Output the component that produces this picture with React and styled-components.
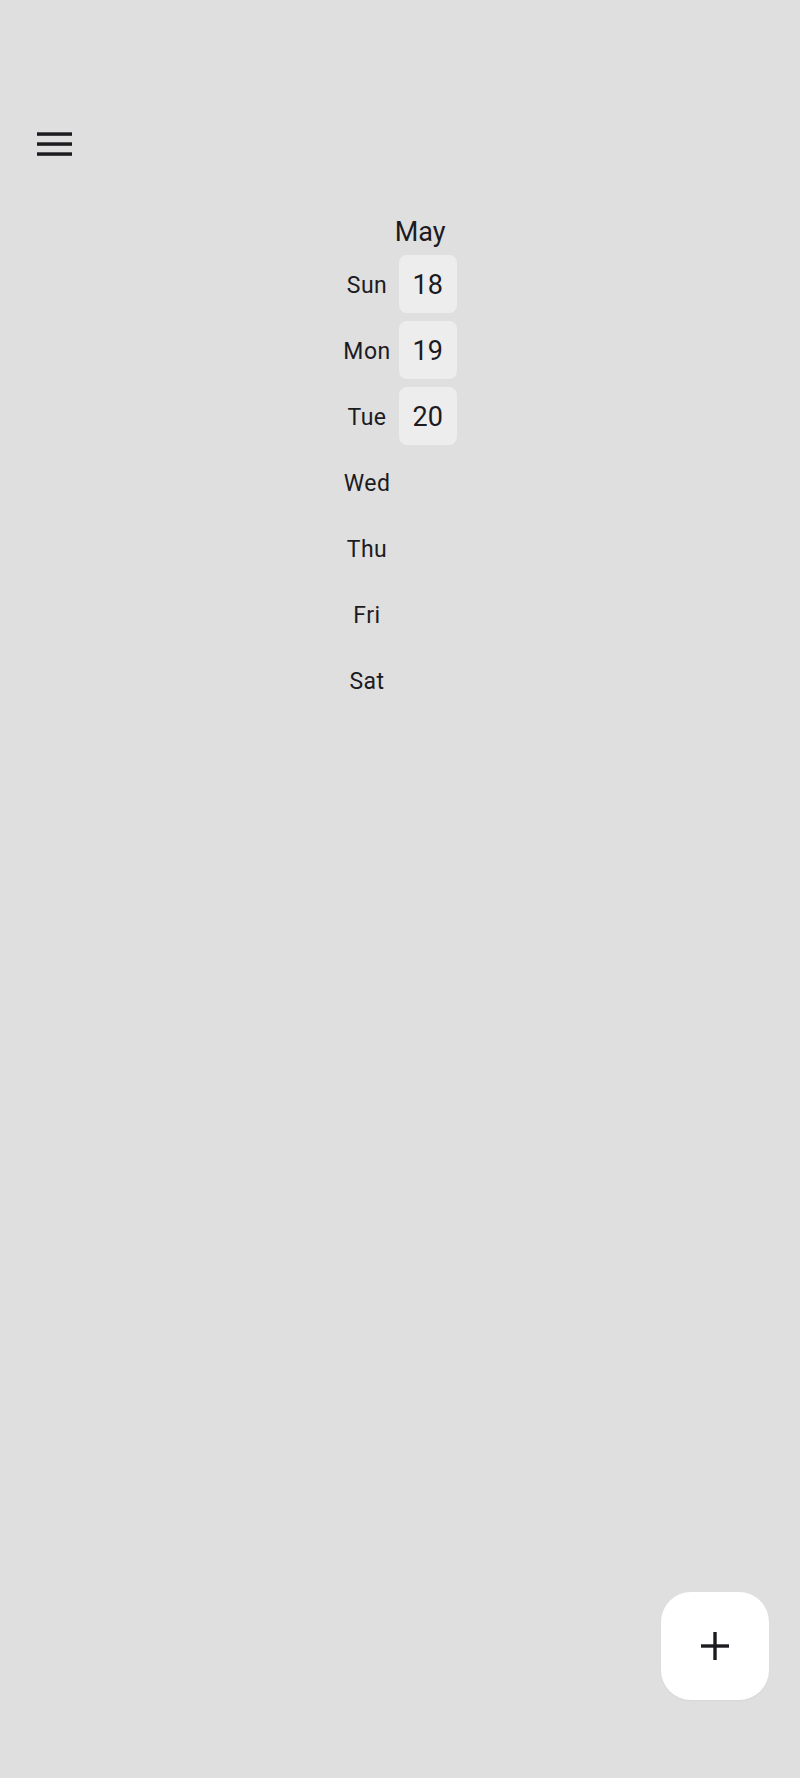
import React from 'react';
import styled, { createGlobalStyle } from 'styled-components';

const GlobalStyle = createGlobalStyle`
  html, body {
    margin: 0;
    padding: 0;
    background: #dfdfdf;
  }
  body {
    font-family: Roboto, "Liberation Sans", sans-serif;
    color: #1c1b1f;
  }
`;

const Page = styled.div`
  position: relative;
  min-height: 1778px;
  background: #dfdfdf;
`;

const TopBar = styled.div`
  display: flex;
  align-items: center;
  padding: 120px 0 0 30px;
  height: 48px;
`;

const MenuButton = styled.button`
  width: 48px;
  height: 48px;
  padding: 0;
  border: none;
  background: transparent;
  display: flex;
  align-items: center;
  justify-content: center;
  color: #1c1b1f;
`;

const Calendar = styled.div`
  margin-top: 50px;
  display: flex;
  justify-content: center;
`;

const Grid = styled.div`
  display: grid;
  grid-template-columns: auto 58px;
  column-gap: 8px;
  row-gap: 8px;
  align-items: center;
`;

const MonthLabel = styled.div`
  grid-column: 2;
  font-size: 27px;
  line-height: 32px;
  margin-top: -2px;
  margin-bottom: -1px;
  margin-left: -4px;
  white-space: nowrap;
`;

const DayName = styled.div`
  grid-column: 1;
  height: 58px;
  display: flex;
  align-items: center;
  justify-content: center;
  font-size: 23px;
  letter-spacing: 0.5px;
  padding: 3px 0 0 0;
  box-sizing: border-box;
`;

const DateCell = styled.div`
  grid-column: 2;
  height: 58px;
  display: flex;
  align-items: center;
  justify-content: center;
  border-radius: 8px;
  font-size: 27px;
  padding-top: 1px;
  box-sizing: border-box;
  background: ${(p) => (p.$filled ? '#ededed' : 'transparent')};
`;

const Fab = styled.button`
  position: absolute;
  right: 31px;
  bottom: 78px;
  width: 108px;
  height: 108px;
  border: none;
  border-radius: 30px;
  background: #ffffff;
  display: flex;
  align-items: center;
  justify-content: center;
  color: #1c1b1f;
  box-shadow: 0 1px 2px rgba(0, 0, 0, 0.04);
`;

const days = [
  { name: 'Sun', date: 18 },
  { name: 'Mon', date: 19 },
  { name: 'Tue', date: 20 },
  { name: 'Wed' },
  { name: 'Thu' },
  { name: 'Fri' },
  { name: 'Sat' },
];

export default function App() {
  return (
    <Page>
      <GlobalStyle />
      <TopBar>
        <MenuButton aria-label="menu">
          <svg width="48" height="48" viewBox="0 0 48 48">
            <rect x="7" y="12.3" width="35" height="3.5" fill="currentColor" />
            <rect x="7" y="22.3" width="35" height="3.5" fill="currentColor" />
            <rect x="7" y="32.3" width="35" height="3.5" fill="currentColor" />
          </svg>
        </MenuButton>
      </TopBar>
      <Calendar>
        <Grid>
          <MonthLabel>May</MonthLabel>
          {days.map((d) => (
            <React.Fragment key={d.name}>
              <DayName>{d.name}</DayName>
              <DateCell $filled={!!d.date}>{d.date}</DateCell>
            </React.Fragment>
          ))}
        </Grid>
      </Calendar>
      <Fab aria-label="add">
        <svg width="28" height="28" viewBox="0 0 28 28">
          <rect x="0" y="12.3" width="28" height="3.4" fill="currentColor" />
          <rect x="12.3" y="0" width="3.4" height="28" fill="currentColor" />
        </svg>
      </Fab>
    </Page>
  );
}
